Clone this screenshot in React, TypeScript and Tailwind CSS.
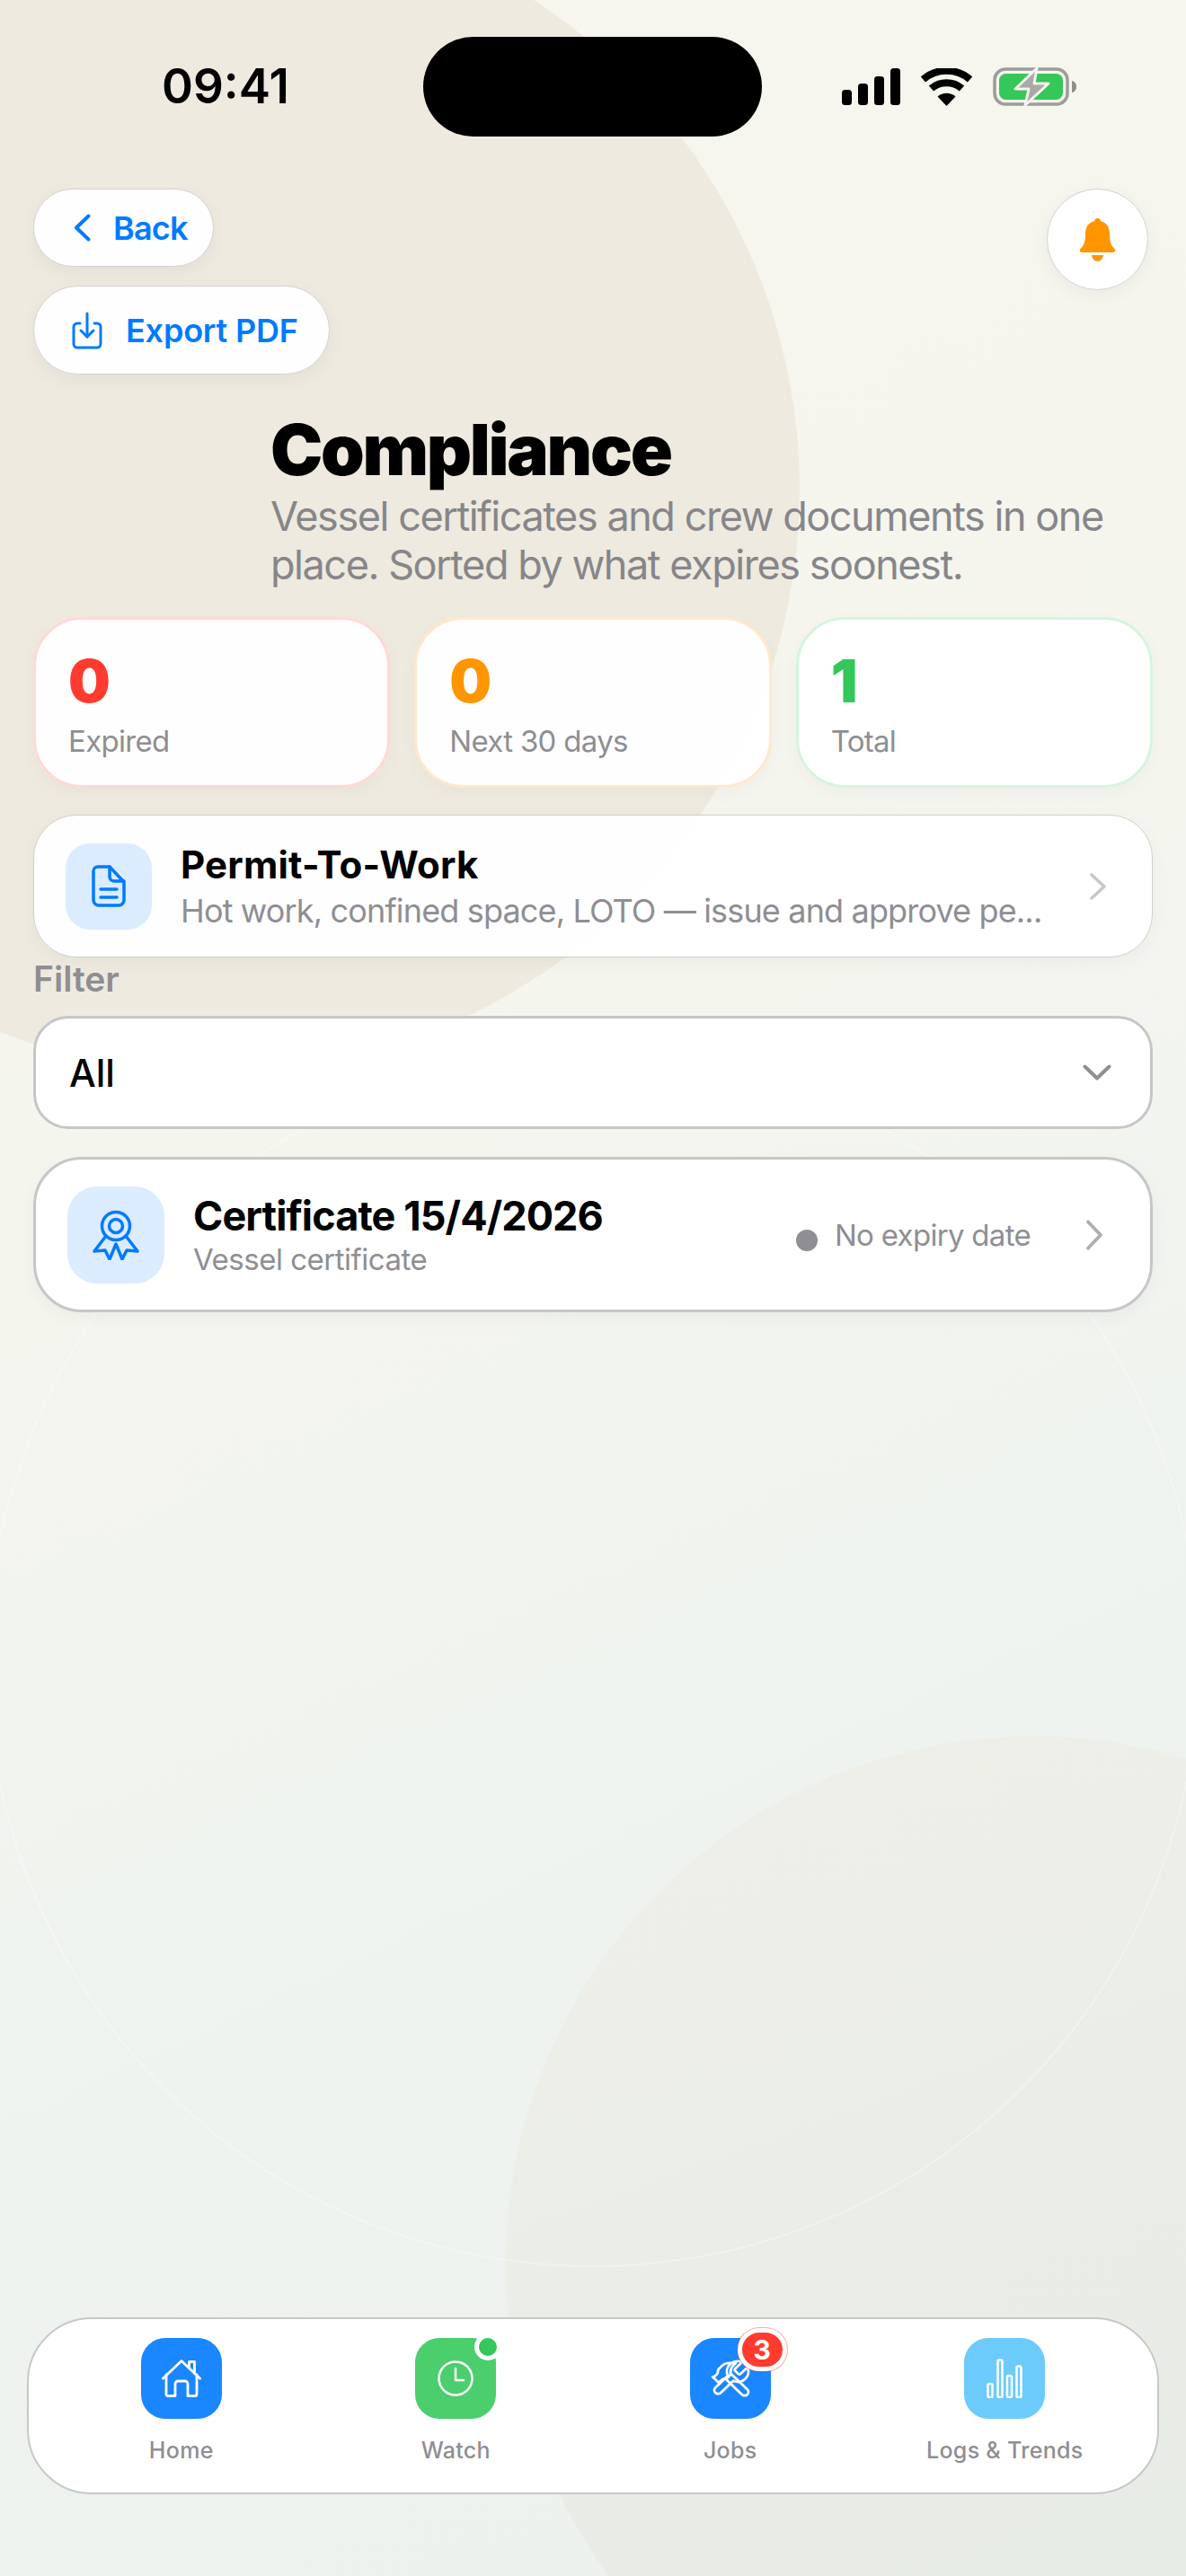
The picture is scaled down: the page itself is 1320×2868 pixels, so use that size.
function SignalIcon() {
  return (
    <svg width="65" height="41" viewBox="0 0 65 41" fill="#000">
      <rect x="0" y="24" width="11" height="17" rx="3.5" />
      <rect x="18" y="17" width="11" height="24" rx="3.5" />
      <rect x="36" y="9" width="11" height="32" rx="3.5" />
      <rect x="54" y="0" width="11" height="41" rx="3.5" />
    </svg>
  );
}

function WifiIcon() {
  return (
    <svg width="57" height="42" viewBox="0 0 57 42" fill="none" stroke="#000" strokeWidth="8">
      <path d="M2.5 12.5C17 -0.5 40 -0.5 54.5 12.5" />
      <path d="M11.5 22.5C21 14 36 14 45.5 22.5" />
      <path d="M18.5 31.5L28.5 42L38.5 31.5C33 26.5 24 26.5 18.5 31.5Z" fill="#000" stroke="none" />
    </svg>
  );
}

function BatteryIcon() {
  return (
    <svg width="93" height="43" viewBox="0 0 93 43" fill="none">
      <rect x="2" y="2" width="81" height="39" rx="12" stroke="#9c9c98" strokeWidth="3.5" />
      <rect x="7" y="7" width="71" height="29" rx="7.5" fill="#34c759" />
      <path d="M88 15C91 15.5 93 18 93 21.5C93 25 91 27.500 88 28Z" fill="#8e8e8a" />
      <path d="M49 1L25 24H40L36 42L62 18H46Z" fill="#a9a9a5" stroke="#f6f4ee" strokeWidth="3" strokeLinejoin="round" />
    </svg>
  );
}

function BellIcon() {
  return (
    <svg width="41" height="48" viewBox="0 0 41 48" fill="#ff9500">
      <path d="M20.500 0C18.600 0 17.300 1.400 17 3.200C10.500 4.800 7 10 7 17C7 26 5.500 30 1.500 34C0 35.500 0.800 38 3 38H38C40.200 38 41 35.500 39.500 34C35.500 30 34 26 34 17C34 10 30.500 4.800 24 3.200C23.700 1.400 22.400 0 20.500 0Z" />
      <path d="M14 41H27C26.500 45 24 48 20.500 48C17 48 14.500 45 14 41Z" />
    </svg>
  );
}

function ExportIcon() {
  return (
    <svg width="34" height="42" viewBox="0 0 34 42" fill="none" stroke="#007aff" strokeWidth="3" strokeLinecap="round" strokeLinejoin="round">
      <path d="M9 13H6a4 4 0 0 0-4 4v19a4 4 0 0 0 4 4h22a4 4 0 0 0 4-4V17a4 4 0 0 0-4-4h-3" />
      <path d="M17 2v26" />
      <path d="M10 21l7 7 7-7" />
    </svg>
  );
}

function DocIcon() {
  return (
    <svg width="38" height="47" viewBox="0 0 38 47" fill="none" stroke="#007aff" strokeWidth="3.500" strokeLinecap="round" strokeLinejoin="round">
      <path d="M7 2H20L36 19V39a6 6 0 0 1-6 6H8a6 6 0 0 1-6-6V7a5 5 0 0 1 5-5Z" />
      <path d="M20 2V13a5 5 0 0 0 5 5H36" />
      <path d="M10 27H28" />
      <path d="M10 36H28" />
    </svg>
  );
}

function AwardIcon() {
  return (
    <svg width="52" height="56" viewBox="0 0 52 56" fill="none" stroke="#007aff" strokeWidth="3.500" strokeLinecap="round" strokeLinejoin="round">
      <circle cx="26" cy="18" r="15.500" />
      <circle cx="26" cy="18" r="7.500" />
      <path d="M15 29L2 46L14 45L19 55L26 38L33 55L38 45L50 46L37 29" />
    </svg>
  );
}

function HomeIcon() {
  return (
    <svg width="44" height="42" viewBox="0 0 44 42" fill="none" stroke="#fff" strokeWidth="2.800" strokeLinecap="round" strokeLinejoin="round">
      <path d="M1.500 21L22 1.500L42.500 21" />
      <path d="M30.500 9.500V2.500H36.500V15" />
      <path d="M5 17V38.500a2 2 0 0 0 2 2H15V27a3 3 0 0 1 3-3H26a3 3 0 0 1 3 3V40.500H37a2 2 0 0 0 2-2V17" />
    </svg>
  );
}

function ClockIcon() {
  return (
    <svg width="40" height="40" viewBox="0 0 40 40" fill="none" stroke="#fff" strokeWidth="2.500" strokeLinecap="round" strokeLinejoin="round">
      <circle cx="20" cy="20" r="18.500" />
      <path d="M20 9V22H29" />
    </svg>
  );
}

function ToolsIcon() {
  return (
    <svg width="48" height="46" viewBox="0 0 24 24" fill="none" stroke="#fff" strokeWidth="1.400" strokeLinecap="round" strokeLinejoin="round" preserveAspectRatio="none">
      <path d="M14.700 6.300a1 1 0 0 0 0 1.400l1.600 1.600a1 1 0 0 0 1.400 0l3.770-3.770a6 6 0 0 1-7.940 7.940l-6.910 6.910a2.120 2.120 0 0 1-3-3l6.910-6.910a6 6 0 0 1 7.940-7.940l-3.760 3.760z" />
      <g transform="translate(24 0) scale(-1 1)">
        <path d="m15 12-9.373 9.373a1 1 0 0 1-3.001-3L12 9" />
        <path d="m18 15 4-4" />
        <path d="m21.500 11.500-1.914-1.914A2 2 0 0 1 19 8.172v-.344a2 2 0 0 0-.586-1.414l-1.657-1.657A6 6 0 0 0 12.516 3H9l1.243 1.243A6 6 0 0 1 12 8.485V10l2 2h1.172a2 2 0 0 1 1.414.586L18.500 14.500" />
      </g>
    </svg>
  );
}

function BarsIcon() {
  return (
    <svg width="40" height="44" viewBox="0 0 40 44" fill="none" stroke="#fff" strokeWidth="2.500">
      <rect x="1.500" y="28" width="5" height="15" rx="1.500" />
      <rect x="12.500" y="1.500" width="5" height="41.500" rx="1.500" />
      <rect x="23" y="19" width="5" height="24" rx="1.500" />
      <rect x="33.500" y="8.500" width="5" height="34.500" rx="1.500" />
    </svg>
  );
}

function ChevronLeftIcon() {
  return (
    <svg width="19" height="31" viewBox="0 0 19 31" fill="none" stroke="#007aff" strokeWidth="4" strokeLinecap="round" strokeLinejoin="round">
      <path d="M16.500 2.500L3 15.500L16.500 28.500" />
    </svg>
  );
}

function ChevronRightIcon({ height, color }: { height: number; color: string }) {
  return (
    <svg width="20" height={height} viewBox="0 0 20 32" fill="none" stroke={color} strokeWidth="3.600" strokeLinecap="round" strokeLinejoin="round" preserveAspectRatio="none">
      <path d="M3 3L17 16L3 29" />
    </svg>
  );
}

function ChevronDownIcon() {
  return (
    <svg width="32" height="18" viewBox="0 0 32 18" fill="none" stroke="#8e8e93" strokeWidth="4" strokeLinecap="round" strokeLinejoin="round">
      <path d="M2.500 2.500L16 15.500L29.500 2.500" />
    </svg>
  );
}

const stats = [
  { value: '0', label: 'Expired', border: 'border-[#ffd9d7]', color: 'text-[#ff3b30]' },
  { value: '0', label: 'Next 30 days', border: 'border-[#ffe8cc]', color: 'text-[#ff9500]' },
  { value: '1', label: 'Total', border: 'border-[#d6f4df]', color: 'text-[#34c759]' },
];

export default function App() {
  return (
    <div className="relative flex h-[2868px] w-[1320px] flex-col overflow-hidden bg-[linear-gradient(155deg,#f8f6ee_0%,#f4f5ee_45%,#eef3ef_68%,#ecf1ed_100%)] font-['Inter',sans-serif]">
      {/* Background shapes */}
      <div className="absolute left-[-410px] top-[-105px] h-[1300px] w-[1300px] rounded-full bg-[#eeeadf]" />
      <div className="absolute left-[563px] top-[1933px] h-[1174px] w-[1174px] rounded-full bg-[linear-gradient(160deg,#eeefe8_0%,#e8ece6_70%)]" />
      <div className="absolute left-[-15px] top-[1174px] h-[1350px] w-[1350px] rounded-full border-2 border-white/30" />

      <div className="relative flex flex-1 flex-col">
        {/* Status bar */}
        <div className="flex items-center pl-[180px] pt-[41px]">
          <span className="w-[291px] text-[53px] font-semibold leading-[111px] text-black">09:41</span>
          <div className="h-[111px] w-[377px] rounded-full bg-black" />
          <div className="ml-[89px] flex items-center gap-[23px]">
            <SignalIcon />
            <WifiIcon />
            <BatteryIcon />
          </div>
        </div>

        {/* Header */}
        <div className="mt-[58px] flex items-start justify-between pl-[37px] pr-[42px]">
          <div className="flex flex-col items-start gap-[21px]">
            <button className="flex h-[87px] w-[201px] items-center gap-[25px] rounded-full border border-[#d2d2d2] bg-white/95 pl-[44px] text-[36px] font-semibold tracking-[-0.8px] text-[#007aff] shadow-[0_6px_20px_rgba(0,0,0,0.05)]">
              <ChevronLeftIcon />
              Back
            </button>
            <button className="flex h-[99px] w-[330px] items-center gap-[26px] rounded-full border border-[#d2d2d2] bg-white/95 pl-[42px] text-[36px] font-semibold tracking-[-0.2px] text-[#007aff] shadow-[0_6px_20px_rgba(0,0,0,0.05)]">
              <ExportIcon />
              Export PDF
            </button>
          </div>
          <button className="flex h-[113px] w-[113px] items-center justify-center rounded-full border border-[#d2d2d2] bg-white/95 shadow-[0_6px_20px_rgba(0,0,0,0.05)]">
            <BellIcon />
          </button>
        </div>

        {/* Title */}
        <div className="mt-[45px] pl-[301px] pr-[60px]">
          <h1 className="text-[78px] font-black leading-[78px] tracking-[-2.3px] text-black">Compliance</h1>
          <p className="mt-[8px] text-[45px] leading-[54px] tracking-[-1.45px] text-[#86868a]">
            Vessel certificates and crew documents in one place. Sorted by what expires soonest.
          </p>
        </div>

        {/* Stat cards */}
        <div className="mt-[31px] grid grid-cols-3 gap-[27px] px-[37px]">
          {stats.map((s) => (
            <div key={s.label} className={`h-[190px] rounded-[54px] border-[3px] bg-white/95 pl-[36px] pt-[33px] shadow-[0_6px_20px_rgba(0,0,0,0.03)] ${s.border}`}>
              <div className={`text-[66px] font-black leading-[70px] ${s.color}`}>{s.value}</div>
              <div className="mt-[10px] text-[33px] leading-[44px] tracking-[-0.7px] text-[#8e8e93]">{s.label}</div>
            </div>
          ))}
        </div>

        {/* Permit-To-Work */}
        <div className="mx-[37px] mt-[30px] flex h-[159px] items-center rounded-[48px] border border-[#cfcfcf] bg-white/95 pl-[35px] pr-[50px] shadow-[0_6px_20px_rgba(0,0,0,0.04)]">
          <div className="flex h-[96px] w-[96px] shrink-0 items-center justify-center rounded-[27px] bg-[#dcecff]">
            <DocIcon />
          </div>
          <div className="ml-[32px] min-w-0 flex-1">
            <div className="text-[42px] font-bold leading-[52px] tracking-[0.2px] text-black">Permit-To-Work</div>
            <div className="mt-[2px] whitespace-nowrap text-[36px] leading-[46px] tracking-[-0.85px] text-[#8e8e93]">
              Hot work, confined space, LOTO — issue and approve pe...
            </div>
          </div>
          <ChevronRightIcon height={32} color="#c7c7cc" />
        </div>

        {/* Filter */}
        <div className="pl-[37px] text-[39px] font-semibold leading-[48px] text-[#8e8e93]">Filter</div>
        <div className="mx-[37px] mt-[17px] flex h-[126px] items-center justify-between rounded-[39px] border-[3px] border-[#c6c6c8] bg-white pl-[37px] pr-[43px]">
          <span className="text-[42px] font-medium text-black">All</span>
          <ChevronDownIcon />
        </div>

        {/* Certificate row */}
        <div className="mx-[37px] mt-[31px] flex h-[173px] items-center rounded-[54px] border-[3px] border-[#c6c6c8] bg-white pl-[35px] pr-[52px] shadow-[0_6px_20px_rgba(0,0,0,0.04)]">
          <div className="flex h-[108px] w-[108px] shrink-0 items-center justify-center rounded-[33px] bg-[#dcecff]">
            <AwardIcon />
          </div>
          <div className="ml-[32px] flex-1">
            <div className="text-[45px] font-bold leading-[54px] tracking-[-0.9px] text-black">Certificate 15/4/2026</div>
            <div className="text-[33px] leading-[42px] tracking-[-0.5px] text-[#8e8e93]">Vessel certificate</div>
          </div>
          <span className="mt-[12px] h-[24px] w-[24px] rounded-full bg-[#8e8e93]" />
          <span className="ml-[19px] mr-[61px] text-[33px] leading-[44px] tracking-[-0.7px] text-[#8e8e93]">No expiry date</span>
          <ChevronRightIcon height={36} color="#aeaeb2" />
        </div>

        {/* Bottom nav */}
        <div className="mx-[30px] mb-[91px] mt-auto grid h-[197px] grid-cols-4 rounded-[72px] border-2 border-[#c8c8c8] bg-white px-[17px] pt-[21px]">
          <NavItem label="Home" tile="bg-[#1a86ff]">
            <HomeIcon />
          </NavItem>
          <NavItem
            label="Watch"
            tile="bg-[#4bce6c]"
            badge={<span className="absolute -right-[6px] -top-[5px] h-[30px] w-[30px] rounded-full border-[5px] border-white bg-[#34c759]" />}
          >
            <ClockIcon />
          </NavItem>
          <NavItem
            label="Jobs"
            tile="bg-[#1a86ff]"
            badge={
              <span className="absolute -right-[18px] -top-[11px] flex h-[48px] w-[55px] items-center justify-center rounded-full border-[5px] border-white bg-[#ff3b30] text-[30px] font-bold text-white shadow-[0_0_0_1px_rgba(255,59,48,0.45)]">
                3
              </span>
            }
          >
            <ToolsIcon />
          </NavItem>
          <NavItem label="Logs & Trends" tile="bg-[#6dcbfb]">
            <BarsIcon />
          </NavItem>
        </div>
      </div>
    </div>
  );
}

function NavItem({ label, tile, badge, children }: { label: string; tile: string; badge?: React.ReactNode; children: React.ReactNode }) {
  return (
    <div className="flex flex-col items-center">
      <div className={`relative flex h-[90px] w-[90px] items-center justify-center rounded-[27px] ${tile}`}>
        {children}
        {badge}
      </div>
      <span className="mt-[18px] text-[25px] font-medium leading-[34px] tracking-[0.3px] text-[#8e8e93]">{label}</span>
    </div>
  );
}
